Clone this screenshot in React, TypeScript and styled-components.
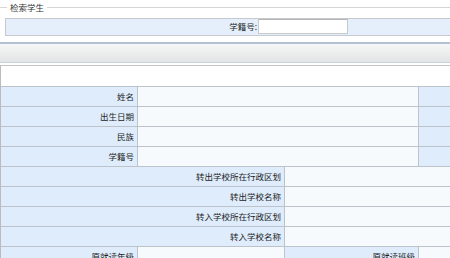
import React from "react";
import styled, { createGlobalStyle } from "styled-components";

const Global = createGlobalStyle`
  html, body { margin: 0; padding: 0; background: #fff; }
  body {
    font-family: "Noto Sans CJK SC", "Noto Sans", sans-serif;
    font-size: 8.5px;
    color: #1e1e1e;
    overflow: hidden;
    width: 450px;
  }
`;

const Page = styled.div`
  width: 450px;
  overflow: hidden;
`;

const Fieldset = styled.fieldset`
  margin: 0;
  padding: 4px 0 0 5px;
  border: none;
  border-top: 1px solid #d6d6d6;
  min-width: 0;
`;

const Legend = styled.legend`
  margin-left: 2px;
  padding: 0 3px;
  font-size: 8.5px;
  line-height: 14px;
  color: #333;
`;

const SearchBox = styled.div`
  box-sizing: border-box;
  height: 18px;
  width: 480px;
  background: #e4effb;
  border: 1px solid #c6cacf;
  display: grid;
  grid-template-columns: 252px 90px 1fr;
  align-items: start;
`;

const SearchLabel = styled.label`
  text-align: right;
  line-height: 15px;
  padding-right: 1px;
`;

const SearchInput = styled.input`
  box-sizing: border-box;
  width: 90px;
  height: 15px;
  margin: 0;
  padding: 0 2px;
  border: 1px solid #c9c9c9;
  border-top-color: #b5b5b5;
  background: #fff;
  font: inherit;
`;

const Bar = styled.div`
  box-sizing: border-box;
  margin-top: 6px;
  height: 21px;
  border-top: 2px solid #b3c2d2;
  border-bottom: 1px solid #c9d2db;
  background: linear-gradient(#f6f6f6, #e3e4e6);
`;

const Panel = styled.div`
  margin-top: 2px;
  width: 620px;
  border-left: 1px solid #bcbcbc;
  border-top: 1px solid #c4c4c4;
`;

const BlankRow = styled.div`
  height: 20px;
  background: #fff;
`;

const Grid = styled.div`
  display: grid;
  grid-template-columns: 137px 147px 134px 1fr;
  grid-auto-rows: 20px;
  border-top: 1px solid #bcc3ca;
`;

const Cell = styled.div<{ $label?: boolean; $span?: number }>`
  box-sizing: border-box;
  grid-column: span ${(p) => p.$span ?? 1};
  background: ${(p) => (p.$label ? "#deecfb" : "#f7fafd")};
  border-right: 1px solid #bcc3ca;
  border-bottom: 1px solid #bcc3ca;
  text-align: right;
  padding-right: 3px;
  line-height: 19px;
  white-space: nowrap;
  overflow: hidden;
`;

const topRows = ["姓名", "出生日期", "民族", "学籍号"];
const wideRows = ["转出学校所在行政区划", "转出学校名称", "转入学校所在行政区划", "转入学校名称"];

export default function App() {
  return (
    <Page>
      <Global />
      <Fieldset>
        <Legend>检索学生</Legend>
        <SearchBox>
          <SearchLabel htmlFor="xjh">学籍号:</SearchLabel>
          <SearchInput id="xjh" type="text" />
          <span />
        </SearchBox>
      </Fieldset>
      <Bar />
      <Panel>
        <BlankRow />
        <Grid>
          {topRows.map((t) => (
            <React.Fragment key={t}>
              <Cell $label>{t}</Cell>
              <Cell $span={2} />
              <Cell $label />
            </React.Fragment>
          ))}
          {wideRows.map((t) => (
            <React.Fragment key={t}>
              <Cell $label $span={2}>{t}</Cell>
              <Cell $span={2} />
            </React.Fragment>
          ))}
          <Cell $label>原就读年级</Cell>
          <Cell />
          <Cell $label>原就读班级</Cell>
          <Cell />
        </Grid>
      </Panel>
    </Page>
  );
}
